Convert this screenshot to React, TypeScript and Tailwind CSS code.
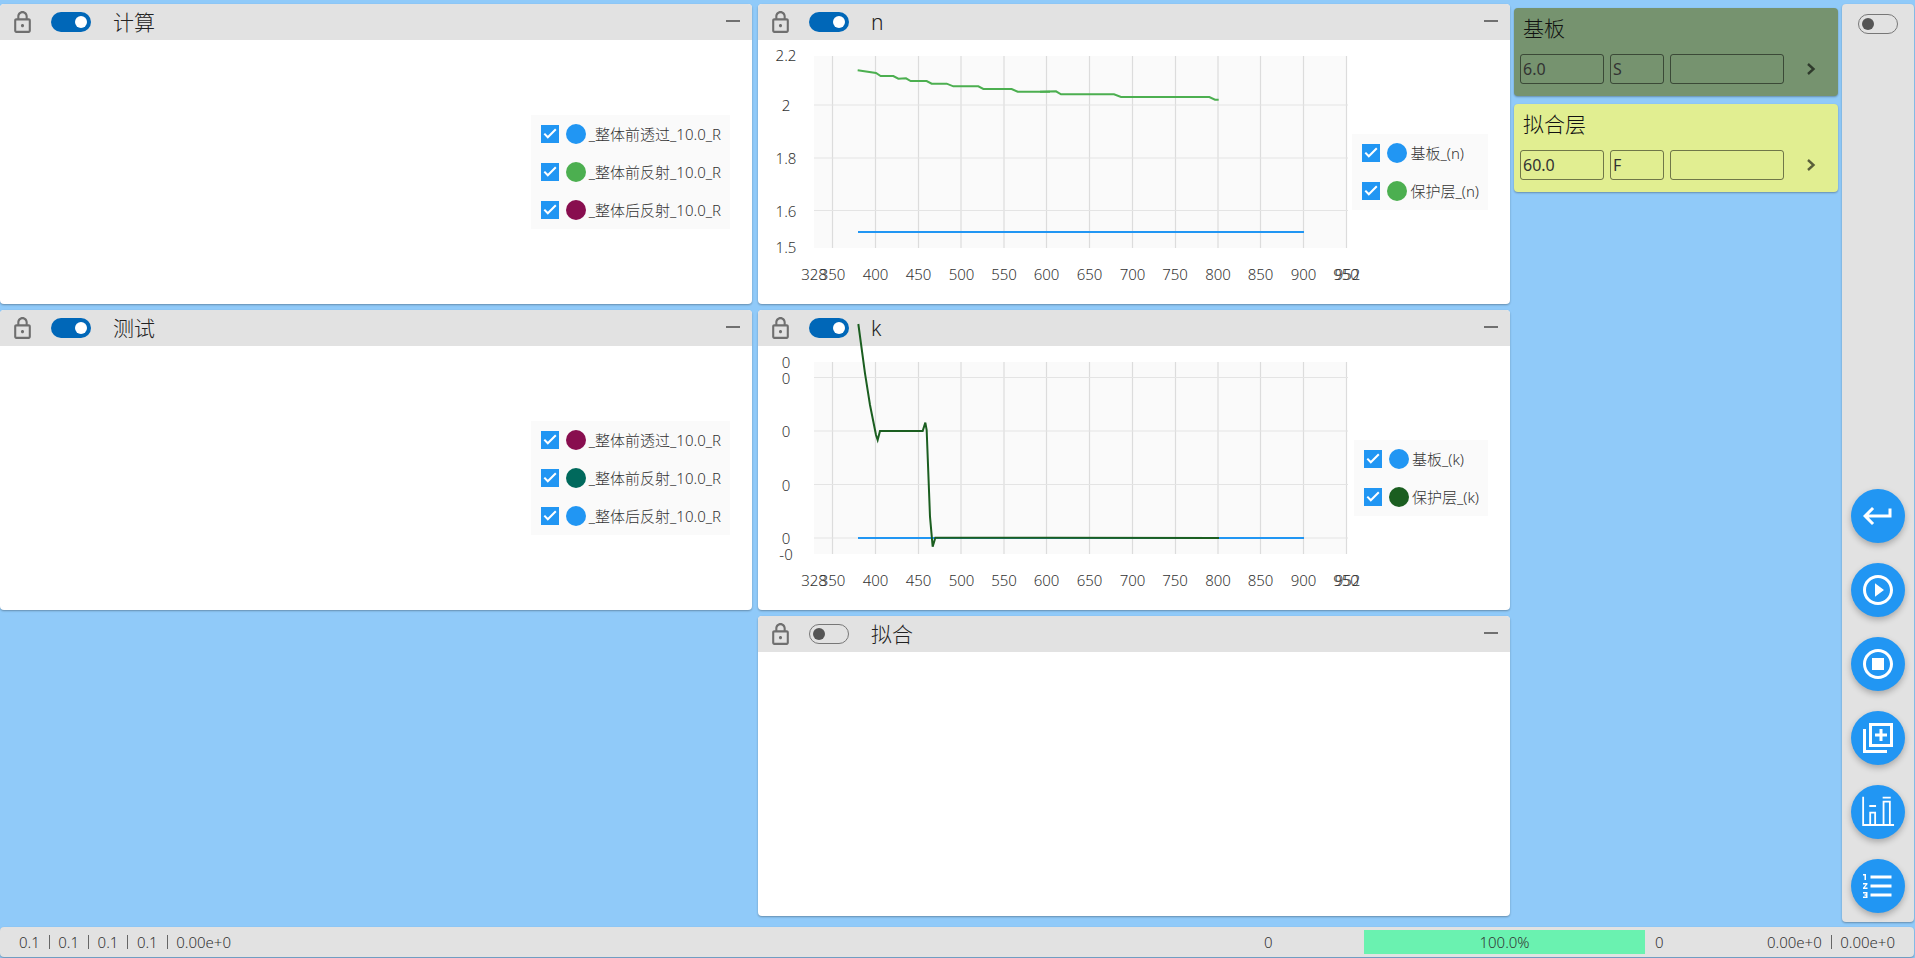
import React from "react";

const pts = (arr: number[][], ox: number, oy: number, sx: number) =>
  arr.map(([x, y]) => `${ox + x / sx - 758},${oy + y / 3 - 40}`).join(" ");

const LockIcon = () => (
  <svg viewBox="0 0 24 24" className="w-[25px] h-[25px] flex-none fill-[#6f6f6f]">
    <path d="M18 8h-1V6c0-2.76-2.24-5-5-5S7 3.24 7 6v2H6c-1.1 0-2 .9-2 2v10c0 1.1.9 2 2 2h12c1.1 0 2-.9 2-2V10c0-1.1-.9-2-2-2zM9 6c0-1.66 1.34-3 3-3s3 1.34 3 3v2H9V6zm9 14H6V10h12v10zm-6-3.5c.83 0 1.5-.67 1.5-1.5s-.67-1.5-1.5-1.5-1.5.67-1.5 1.5.67 1.5 1.5 1.5z" />
  </svg>
);

const Toggle = ({ on }: { on: boolean }) =>
  on ? (
    <div className="w-10 h-5 rounded-full bg-[#0067b8] flex items-center justify-end pr-1 flex-none">
      <div className="w-3 h-3 rounded-full bg-white" />
    </div>
  ) : (
    <div className="w-10 h-5 rounded-full border border-[#777777] flex items-center pl-[3px] flex-none">
      <div className="w-3 h-3 rounded-full bg-[#555555]" />
    </div>
  );

const Check = () => (
  <div className="w-[18px] h-[18px] bg-[#2196f3] flex-none">
    <svg viewBox="0 0 18 18" className="w-[18px] h-[18px]">
      <polyline points="3.3,8.6 6.8,12.3 14.8,4.2" fill="none" stroke="white" strokeWidth="2" />
    </svg>
  </div>
);

const Legend = ({ items }: { items: [string, string][] }) => (
  <div className="bg-[#fafafa] pl-[10px] pr-[9px] py-[10px] flex flex-col gap-5 flex-none">
    {items.map(([label, color]) => (
      <div key={label} className="flex items-center h-[18px]">
        <Check />
        <div className="w-5 h-5 rounded-full ml-[7px] flex-none" style={{ background: color }} />
        <span className="ml-[3px] text-[15px] leading-[18px] font-light text-[#333333] whitespace-nowrap">{label}</span>
      </div>
    ))}
  </div>
);

const xLabels = [
  [56, "328"], [74.5, "350"], [117.5, "400"], [160.5, "450"], [203.5, "500"], [246, "550"], [288.5, "600"],
  [331.5, "650"], [374.5, "700"], [417, "750"], [460, "800"], [502.5, "850"], [545.5, "900"], [588, "950"], [589.5, "952"],
] as [number, string][];
const vGrid = [74.5, 117.5, 160.5, 203, 246, 288.5, 331.5, 374.5, 417.5, 460, 502.5, 545.5, 588.5];

const Chart = ({ yLabels, hGrid, plotTop, plotBottom, children }: { yLabels: [number, string][]; hGrid: number[]; plotTop: number; plotBottom: number; children: React.ReactNode }) => (
  <svg width="590" height="264" className="overflow-visible flex-none font-['Noto_Sans','Noto_Sans_CJK_SC',sans-serif]">
    <rect x="56" y={plotTop} width="533" height={plotBottom - plotTop} fill="#fafafa" />
    {vGrid.map((x) => (
      <line key={x} x1={x} x2={x} y1={plotTop} y2={plotBottom} stroke="#dcdcdc" strokeWidth="1.2" />
    ))}
    {hGrid.map((y) => (
      <line key={y} x1="56" x2="590" y1={y} y2={y} stroke="#e4e4e4" strokeWidth="1.2" />
    ))}
    {yLabels.map(([y, t], i) => (
      <text key={i} x="28" y={y + 5} textAnchor="middle" fontSize="15" fontWeight="300" fill="#333333">{t}</text>
    ))}
    {xLabels.map(([x, t]) => (
      <text key={t} x={x} y="240" textAnchor="middle" fontSize="15" fontWeight="300" fill="#333333">{t}</text>
    ))}
    {children}
  </svg>
);

const nGreen = pts(
  [[323, 211], [378, 219], [392, 228], [430, 228], [445, 236], [468, 235], [482, 243], [530, 243], [545, 251], [590, 251], [610, 259], [685, 259], [700, 267], [785, 267], [803, 275], [900, 275]],
  750, 0, 3
);
const nGreen2 = pts(
  [[0, 275], [48, 274], [63, 283], [222, 283], [243, 291], [508, 291], [525, 299], [536, 299]],
  1040, 0, 3
);
const kGreen =
  pts(
    [[325, 42], [345, 190], [360, 285], [378, 375], [383, 390], [390, 363], [518, 363], [526, 338], [530, 360], [540, 620], [548, 710], [556, 683], [900, 683]],
    750, 4, 3
  ) + ` ${1219 - 758},${538 - 346}`;

const NChart = () => (
  <Chart
    plotTop={16}
    plotBottom={208}
    hGrid={[65, 118, 170.5]}
    yLabels={[[16, "2.2"], [66, "2"], [119, "1.8"], [172, "1.6"], [208, "1.5"]]}
  >
    <polyline points="100,192 546,192" fill="none" stroke="#2196f3" strokeWidth="2" />
    <polyline points={nGreen} fill="none" stroke="#4caf50" strokeWidth="2" />
    <polyline points={nGreen2} fill="none" stroke="#4caf50" strokeWidth="2" />
  </Chart>
);

const KChart = () => (
  <Chart
    plotTop={16}
    plotBottom={208}
    hGrid={[31.5, 85, 138.5, 192]}
    yLabels={[[17, "0"], [33, "0"], [86, "0"], [140, "0"], [193, "0"], [209, "-0"]]}
  >
    <polyline points="100,192 546,192" fill="none" stroke="#2196f3" strokeWidth="2" />
    <polyline points={kGreen} fill="none" stroke="#1b5e20" strokeWidth="2" />
  </Chart>
);

const Panel = ({ title, on, children, className }: { title: string; on: boolean; children?: React.ReactNode; className: string }) => (
  <div className={`bg-white rounded shadow-[0_1px_2px_rgba(0,0,0,0.3)] flex flex-col w-[752px] flex-none ${className}`}>
    <div className="h-9 bg-[#e2e2e2] rounded-t flex items-center pl-[10px] pr-3 flex-none">
      <LockIcon />
      <div className="ml-[16px]"><Toggle on={on} /></div>
      <span className="ml-[22px] text-[21px] leading-none font-light text-[#222222]">{title}</span>
      <div className="ml-auto w-[14px] h-[2px] bg-[#707070] -translate-y-[1px]" />
    </div>
    <div className="flex-1 flex items-center justify-between pr-[22px] min-h-0">{children}</div>
  </div>
);

const Field = ({ value, className }: { value: string; className: string }) => (
  <input
    readOnly
    value={value}
    className={`h-[30px] rounded-[3px] border border-black/50 bg-transparent px-[2px] text-[16px] text-[#333333] outline-none flex-none ${className}`}
  />
);

const Card = ({ title, v1, v2, bg }: { title: string; v1: string; v2: string; bg: string }) => (
  <div className={`h-[88px] w-[324px] rounded shadow-[0_1px_2px_rgba(0,0,0,0.3)] ${bg} pl-[6px] flex flex-col`}>
    <div className="h-[41px] mb-[5px] pl-[3px] flex items-center text-[21px] leading-none font-light text-[#111111]">{title}</div>
    <div className="flex items-center gap-[6px]">
      <Field value={v1} className="w-[84px]" />
      <Field value={v2} className="w-[54px]" />
      <Field value="" className="w-[114px]" />
      <svg width="10" height="14" viewBox="0 0 10 14" className="ml-[16px]">
        <polyline points="2,2 7.5,7 2,12" fill="none" stroke="#000000" strokeOpacity="0.6" strokeWidth="2.4" />
      </svg>
    </div>
  </div>
);

const Fab = ({ children }: { children: React.ReactNode }) => (
  <div className="w-[54px] h-[54px] rounded-full bg-[#2196f3] flex items-center justify-center shadow-[0_3px_6px_rgba(0,0,0,0.25)] flex-none">
    <svg viewBox="0 0 24 24" className="w-9 h-9 fill-white">{children}</svg>
  </div>
);

const Sep = () => <span className="w-px h-[14px] bg-[#666666] ml-[9px] mr-[8.5px] flex-none" />;

export default function App() {
  return (
    <div className="h-screen w-full overflow-hidden bg-[#90caf9] flex flex-col pt-1 font-['Noto_Sans','Noto_Sans_CJK_SC',sans-serif] text-[#333333]">
      <div className="flex h-[918px] flex-none">
        <div className="flex flex-col gap-[6px] w-[752px] flex-none">
          <Panel title="计算" on className="h-[300px]">
            <div />
            <Legend items={[["_整体前透过_10.0_R", "#2196f3"], ["_整体前反射_10.0_R", "#4caf50"], ["_整体后反射_10.0_R", "#880e4f"]]} />
          </Panel>
          <Panel title="测试" on className="h-[300px]">
            <div />
            <Legend items={[["_整体前透过_10.0_R", "#880e4f"], ["_整体前反射_10.0_R", "#00695c"], ["_整体后反射_10.0_R", "#2196f3"]]} />
          </Panel>
        </div>
        <div className="flex flex-col gap-[6px] w-[752px] ml-[6px] flex-none">
          <Panel title="n" on className="h-[300px]">
            <NChart />
            <Legend items={[["基板_(n)", "#2196f3"], ["保护层_(n)", "#4caf50"]]} />
          </Panel>
          <Panel title="k" on className="h-[300px]">
            <KChart />
            <Legend items={[["基板_(k)", "#2196f3"], ["保护层_(k)", "#1b5e20"]]} />
          </Panel>
          <Panel title="拟合" on={false} className="h-[300px]" />
        </div>
        <div className="flex flex-col gap-2 ml-1 pt-1 w-[324px] flex-none">
          <Card title="基板" v1="6.0" v2="S" bg="bg-[#76936f]" />
          <Card title="拟合层" v1="60.0" v2="F" bg="bg-[#e1ee91]" />
        </div>
        <div className="ml-1 w-[72px] h-[918px] bg-[#e2e2e2] rounded shadow-[0_1px_2px_rgba(0,0,0,0.3)] flex flex-col items-center pt-[10px] pb-[9px] flex-none">
          <Toggle on={false} />
          <div className="mt-auto flex flex-col gap-5 items-center">
            <Fab><path d="M19 7v4H5.83l3.58-3.59L8 6l-6 6 6 6 1.41-1.41L5.83 13H21V7z" /></Fab>
            <Fab><path d="M10 16.5l6-4.5-6-4.5v9zM12 2C6.48 2 2 6.48 2 12s4.48 10 10 10 10-4.48 10-10S17.52 2 12 2zm0 18c-4.41 0-8-3.59-8-8s3.59-8 8-8 8 3.59 8 8-3.59 8-8 8z" /></Fab>
            <Fab><path d="M12 2C6.48 2 2 6.48 2 12s4.48 10 10 10 10-4.48 10-10S17.52 2 12 2zm0 18c-4.42 0-8-3.58-8-8s3.58-8 8-8 8 3.58 8 8-3.58 8-8 8zm4-4H8V8h8v8z" /></Fab>
            <Fab><path d="M4 6H2v16h16v-2H4V6zm18-4H6v16h16V2zm-2 14H8V4h12v12zm-7-2h2v-3h3V9h-3V6h-2v3h-3v2h3z" /></Fab>
            <Fab>
              <path d="M1.5 1.8H2.7V20H1.5zM6.2 7.4h4.5v1.2H6.2zM6.2 11.8h4.5V20H9.5v-7H7.4v7H6.2zM15.1 1.8h5.4V3h-5.4zM15.1 4.5h5.4V20h-1.2V5.7h-3V20h-1.2zM1.5 20h21.2v1.4H1.5z" />
            </Fab>
            <Fab><path d="M2 17h2v.5H3v1h1v.5H2v1h3v-4H2v1zm1-9h1V4H2v1h1v3zm-1 3h1.8L2 13.1v.9h3v-1H3.2L5 10.9V10H2v1zm5-6v2h14V5H7zm0 14h14v-2H7v2zm0-6h14v-2H7v2z" /></Fab>
          </div>
        </div>
      </div>
      <div className="mt-[5px] h-[30px] w-[1914px] flex-none rounded bg-[#e2e2e2] shadow-[0_1px_2px_rgba(0,0,0,0.3)] flex items-center text-[15px] leading-none font-light text-[#333333]">
        <div className="w-[1264px] pl-[19px] flex items-center flex-none">
          <span>0.1</span><Sep /><span>0.1</span><Sep /><span>0.1</span><Sep /><span>0.1</span><Sep /><span>0.00e+0</span>
        </div>
        <span className="w-[9px] flex-none">0</span>
        <div className="ml-[91px] w-[281px] h-6 bg-[#6af2b0] flex items-center justify-center flex-none">100.0%</div>
        <span className="ml-[10px] flex-none">0</span>
        <div className="ml-auto pr-[19px] flex items-center">
          <span>0.00e+0</span><Sep /><span>0.00e+0</span>
        </div>
      </div>
    </div>
  );
}
